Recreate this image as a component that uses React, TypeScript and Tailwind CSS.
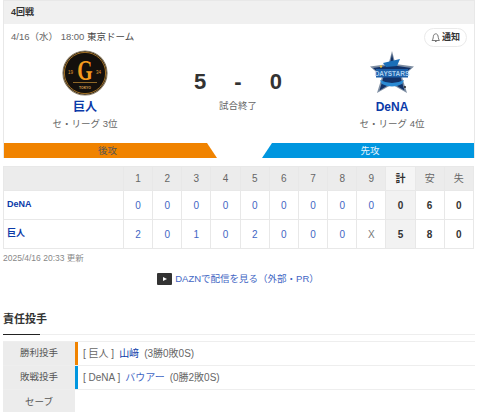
const innings = [1, 2, 3, 4, 5, 6, 7, 8, 9];

const rows = [
  { team: 'DeNA', scores: ['0', '0', '0', '0', '0', '0', '0', '0', '0'], r: 0, h: 6, e: 0 },
  { team: '巨人', scores: ['2', '0', '1', '0', '2', '0', '0', '0', 'X'], r: 5, h: 8, e: 0 },
];

const GiantsLogo = () => (
  <svg width="46" height="46" viewBox="0 0 46 46">
    <circle cx="23" cy="23" r="22" fill="#14100c" stroke="#8a7a60" strokeWidth="1.2" />
    <circle cx="23" cy="23" r="20.6" fill="none" stroke="#c98a2a" strokeWidth="0.8" />
    <text transform="translate(23 30) scale(0.9 1.3)" textAnchor="middle" fontFamily="Liberation Serif" fontWeight="700" fontSize="22" fill="#f39a1e">G</text>
    <text x="6" y="24" fontFamily="Liberation Sans" fontSize="4.5" fill="#e09a30">19</text>
    <text x="34" y="24" fontFamily="Liberation Sans" fontSize="4.5" fill="#e09a30">34</text>
    <rect x="11" y="32" width="24" height="0.8" fill="#b08030" />
    <text x="23" y="38.5" textAnchor="middle" fontFamily="Liberation Sans" fontWeight="700" fontSize="3.4" fill="#d9a050">TOKYO</text>
  </svg>
);

const BaystarsLogo = () => (
  <svg width="46" height="44" viewBox="0 0 46 44">
    <polygon points="23,0 26.5,13 45,15.5 33,26 38,42 23,33.5 8,42 13,26 1,15.5 19.5,13" fill="#7f8fa3" />
    <polygon points="23,3 25.5,14.5 42,17 31.5,26 35.5,39.5 23,32 10.5,39.5 14.5,26 4,17 20.5,14.5" fill="#123268" />
    <path d="M14 12 L31 8 L28 15 L17 16 Z" fill="#1b6fb8" />
    <rect x="7" y="18" width="32" height="8.5" fill="#1c5fa8" />
    <text x="23" y="25" textAnchor="middle" fontFamily="Liberation Sans" fontWeight="700" fontSize="6.5" fill="#a9cfee">DAYSTARS</text>
    <path d="M11 29 Q23 35 35 29 L33 33 Q23 38 13 33 Z" fill="#2a8ad4" />
    <circle cx="12" cy="15.5" r="1.2" fill="#f0c040" />
    <circle cx="36" cy="36" r="1" fill="#222" />
  </svg>
);

const App = () => {
  return (
    <div className="w-[480px] h-[412px] overflow-hidden bg-white pl-[3px] pr-[5px] text-[10px] text-[#666] font-['Liberation_Sans','Noto_Sans_CJK_JP',sans-serif]">
      {/* Score card */}
      <section className="border-x border-t border-[#e8e8e8]">
        <h2 className="h-[23px] bg-[#f0f0f0] pl-[7px] pt-[5px] text-[9px] leading-[13px] font-bold text-[#333]">4回戦</h2>
        <div className="relative h-[119px]">
          <p className="pl-[7px] pt-[6px] text-[9.5px] leading-[14px]">
            4/16（水） 18:00 <span className="text-[#444]">東京ドーム</span>
          </p>
          <button className="absolute right-[7px] top-[4px] flex h-[19px] w-[43px] items-center justify-center gap-[1px] rounded-full border border-[#eaeaea] text-[9px] font-bold text-[#333]">
            <svg width="10" height="11" viewBox="0 0 10 11" fill="none" stroke="#555" strokeWidth="0.8">
              <path d="M1 8.5 C2.5 7 2 5 2.7 3.2 C3.3 1.6 5.6 1.3 6.6 2.8 C7.4 4.2 7 6.5 8.4 8.5 Z" />
              <path d="M4 9.5 H5.6" />
            </svg>
            通知
          </button>
          <div className="flex pt-[6px]">
            <div className="flex w-[162px] flex-col items-center">
              <GiantsLogo />
              <strong className="mt-[3px] text-[12px] leading-[16px] text-[#0b3aa8]">巨人</strong>
              <span className="mt-[2px] text-[9.5px] leading-[14px] text-[#666]">セ・リーグ 3位</span>
            </div>
            <div className="flex w-[144px] flex-col items-center pt-[20px]">
              <div className="flex w-[88px] justify-between text-[22px] leading-[24px] font-bold text-[#333]">
                <span>5</span>
                <span>-</span>
                <span>0</span>
              </div>
              <span className="mt-[5px] text-[9.5px] leading-[14px]">試合終了</span>
            </div>
            <div className="flex flex-1 flex-col items-center">
              <div className="mt-[1px] h-[45px]">
                <BaystarsLogo />
              </div>
              <strong className="mt-[3px] text-[12px] leading-[16px] text-[#0b3aa8]">DeNA</strong>
              <span className="mt-[2px] text-[9.5px] leading-[14px] text-[#666]">セ・リーグ 4位</span>
            </div>
          </div>
        </div>
        <div className="flex h-[15px] text-[9.5px] leading-[15px]">
          <div className="w-[213px] bg-[#f08300] pr-[6px] text-center text-[#555] [clip-path:polygon(0_0,203px_0,100%_100%,0_100%)]">後攻</div>
          <div className="flex-1" />
          <div className="w-[212px] bg-[#0096df] pl-[4px] text-center text-[#e8f4fc] [clip-path:polygon(10px_0,100%_0,100%_100%,0_100%)]">先攻</div>
        </div>
      </section>

      {/* Line score */}
      <table className="mt-[8px] w-[471px] table-fixed border-collapse text-center text-[10px]">
        <thead>
          <tr className="h-[24px] bg-[#ececec] text-[#666]">
            <th className="w-[120px] border border-[#e8e8e8] font-normal"></th>
            {innings.map((n) => (
              <th key={n} className="border border-[#e8e8e8] font-normal">{n}</th>
            ))}
            <th className="border border-[#e8e8e8] bg-[#f5f5f5] font-bold text-[#333]">計</th>
            <th className="border border-[#e8e8e8] font-normal">安</th>
            <th className="border border-[#e8e8e8] font-normal">失</th>
          </tr>
        </thead>
        <tbody>
          {rows.map((row) => (
            <tr key={row.team} className="h-[29px]">
              <td className="border border-[#e8e8e8] pl-[3px] text-left text-[9px] font-bold text-[#0b3aa8]">{row.team}</td>
              {row.scores.map((s, i) => (
                <td key={i} className={`border border-[#e8e8e8] ${s === 'X' ? 'text-[#777]' : 'text-[#3f66c4]'}`}>{s}</td>
              ))}
              <td className="border border-[#e8e8e8] bg-[#f2f2f2] font-bold text-[#333]">{row.r}</td>
              <td className="border border-[#e8e8e8] font-bold text-[#333]">{row.h}</td>
              <td className="border border-[#e8e8e8] font-bold text-[#333]">{row.e}</td>
            </tr>
          ))}
        </tbody>
      </table>
      <p className="mt-[2px] text-[8.5px] leading-[14px] text-[#888]">2025/4/16 20:33 更新</p>

      {/* Streaming link */}
      <div className="mt-[7px] flex items-center justify-center gap-[3px] pr-[2px] text-[9.5px] leading-[14px] text-[#3f66c4]">
        <span className="flex h-[12px] w-[15px] items-center justify-center rounded-[1px] bg-[#333]">
          <span className="h-0 w-0 border-y-[2.5px] border-l-[4px] border-y-transparent border-l-white" />
        </span>
        DAZNで配信を見る（外部・PR）
      </div>

      {/* Pitchers */}
      <h3 className="mt-[25px] h-[24px] border-b border-[#eee] text-[11px] leading-[17px] font-bold text-[#333]">
        <span className="inline-block h-[24px] w-[37px] border-b border-[#222] whitespace-nowrap">責任投手</span>
      </h3>
      <div className="mt-[6px] border-t border-[#eee] text-[10px]">
        <div className="flex h-[24px] border-b border-[#eee]">
          <div className="flex w-[72px] items-center justify-center bg-[#ececec] text-[9.5px] text-[#555]">勝利投手</div>
          <div className="w-[3px] bg-[#f08300]" />
          <div className="flex items-center gap-[5px] pl-[5px]">
            <span>[ 巨人 ]</span>
            <span className="text-[#0b3aa8]">山﨑</span>
            <span>(3勝0敗0S)</span>
          </div>
        </div>
        <div className="flex h-[24px] border-b border-[#eee]">
          <div className="flex w-[72px] items-center justify-center bg-[#ececec] text-[9.5px] text-[#555]">敗戦投手</div>
          <div className="w-[3px] bg-[#0096df]" />
          <div className="flex items-center gap-[5px] pl-[5px]">
            <span>[ DeNA ]</span>
            <span className="text-[#3f66c4]">バウアー</span>
            <span>(0勝2敗0S)</span>
          </div>
        </div>
        <div className="flex h-[24px]">
          <div className="flex w-[72px] items-center justify-center bg-[#ececec] text-[9.5px] text-[#555]">セーブ</div>
        </div>
      </div>
    </div>
  );
};

export default App;
